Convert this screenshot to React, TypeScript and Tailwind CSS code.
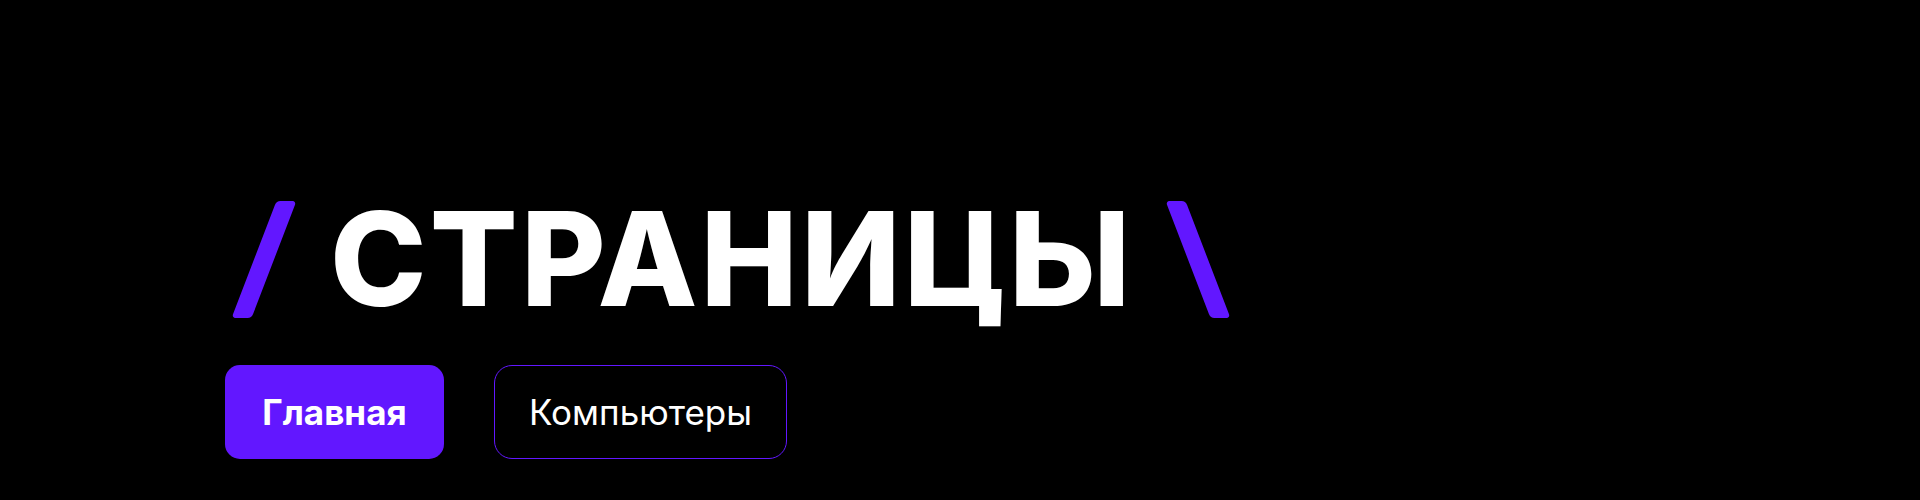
const Slash = ({ back = false }: { back?: boolean }) => (
  <span
    role="img"
    aria-label={back ? "\\" : "/"}
    className={`block h-[117px] w-[20px] shrink-0 rounded-[4px] bg-[#6217ff] ${back ? "skew-x-[21deg]" : "-skew-x-[21deg]"}`}
  />
);

const App = () => {
  return (
    <div className="h-[500px] w-full bg-black pl-[225px] pt-[194px] font-['Inter',sans-serif]">
      <h1 className="flex items-center text-[130px] font-extrabold uppercase leading-none text-white">
        <span className="ml-[29px] mr-[56px]">
          <Slash />
        </span>
        <span className="tracking-[0.024em]">Страницы</span>
        <span className="ml-[55px]">
          <Slash back />
        </span>
      </h1>
      <div className="mt-[41px] flex items-center gap-[50px]">
        <button
          type="button"
          className="flex h-[94px] w-[219px] items-center justify-center rounded-[15px] bg-[#6217ff] text-[35px] font-bold text-white"
        >
          Главная
        </button>
        <button
          type="button"
          className="flex h-[94px] w-[293px] items-center justify-center rounded-[18px] border border-[#6217ff] text-[35px] font-normal text-white"
        >
          Компьютеры
        </button>
      </div>
    </div>
  );
};

export default App;
